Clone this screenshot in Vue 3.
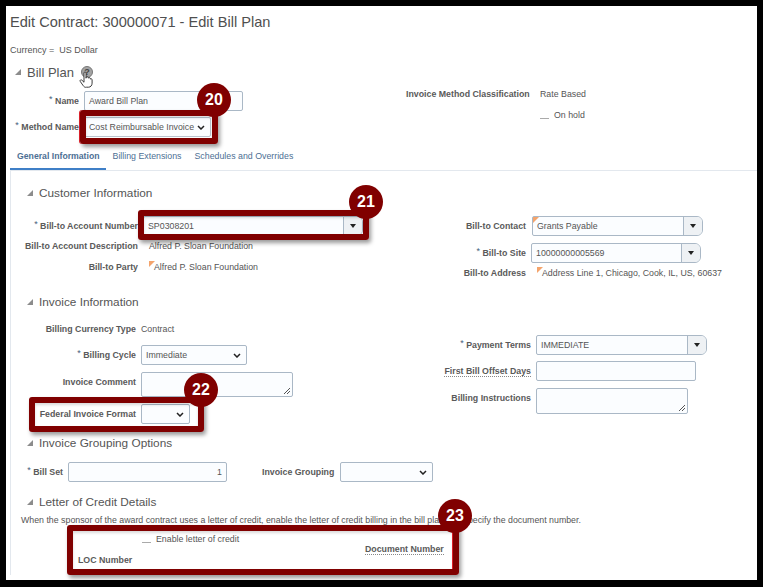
<script setup>
const tabs = ['General Information', 'Billing Extensions', 'Schedules and Overrides']
const callouts = [
  { id: 20, box: { left: '74px', top: '104px', width: '138px', height: '34px' }, dot: { left: '191px', top: '77px' } },
  { id: 21, box: { left: '132px', top: '204px', width: '231px', height: '30px' }, dot: { left: '343px', top: '179px' } },
  { id: 22, box: { left: '23px', top: '391px', width: '175px', height: '35px' }, dot: { left: '178px', top: '367px' } },
  { id: 23, box: { left: '61px', top: '519px', width: '392px', height: '50px' }, dot: { left: '432px', top: '493px' } }
]
</script>

<template>
  <div class="frame">
    <main class="page">
      <h1 class="title">Edit Contract: 300000071 - Edit Bill Plan</h1>
      <p class="currency">Currency = &nbsp;US Dollar</p>

      <h2 class="heading plan">
        <i class="tri"></i>Bill Plan
        <span class="help">?</span>
        <svg class="hand" viewBox="0 0 14 20" width="14" height="18" preserveAspectRatio="none">
          <path d="M5 2.200c0-1.500 2-1.500 2 0V8l.2-1.100c.5-1 2-.8 2 .4l.1.600c.5-1 2-.7 2 .5v.6c.6-.7 1.800-.4 1.800.7v3.800c0 2.500-1.500 4.500-3.500 4.500H7.500C5.800 18.500 5 17.500 4 16L1.200 11.500c-.7-1.200.8-2.300 1.800-1.200L5 12.500z" fill="#fff" stroke="#333" stroke-width="1"/>
        </svg>
      </h2>

      <section class="top">
        <div class="stack top-left">
          <div class="row name-row">
            <label class="lbl w-name"><em>*</em> Name</label>
            <div class="field name-input">Award Bill Plan</div>
          </div>
          <div class="row method-row">
            <label class="lbl w-method"><em>*</em> Method Name</label>
            <div class="field select method-input">Cost Reimbursable Invoice
              <svg class="chev" viewBox="0 0 8 5" width="8" height="5"><path d="M1 1l3 3 3-3" fill="none" stroke="#222" stroke-width="1.500"/></svg>
            </div>
          </div>
        </div>
        <div class="stack top-right">
          <div class="row text-row">
            <label class="lbl w-class">Invoice Method Classification</label>
            <span class="val">Rate Based</span>
          </div>
          <div class="check-row"><i class="dash"></i><span class="val">On hold</span></div>
        </div>
      </section>

      <nav class="tabs">
        <a v-for="(t, i) in tabs" :key="t" class="tab" :class="{ on: i === 0 }">{{ t }}</a>
      </nav>

      <div class="panel">
        <h2 class="heading sub customer-h"><i class="tri"></i>Customer Information</h2>
        <section class="cols customer">
          <div class="left-col">
            <div class="row">
              <label class="lbl w-cust"><em>*</em> Bill-to Account Number</label>
              <div class="field combo account">SP0308201<b class="btn"><i class="down"></i></b></div>
            </div>
            <div class="row text-row">
              <label class="lbl w-cust">Bill-to Account Description</label>
              <span class="val off6">Alfred P. Sloan Foundation</span>
            </div>
            <div class="row text-row party-row">
              <label class="lbl w-cust">Bill-to Party</label>
              <span class="val off6 flagged"><i class="flag"></i>Alfred P. Sloan Foundation</span>
            </div>
          </div>
          <div class="right-col">
            <div class="row">
              <label class="lbl w-right">Bill-to Contact</label>
              <div class="field combo contact"><i class="flag corner"></i>Grants Payable<b class="btn"><i class="down"></i></b></div>
            </div>
            <div class="row site-row">
              <label class="lbl w-right"><em>*</em> Bill-to Site</label>
              <div class="field combo site">10000000005569<b class="btn"><i class="down"></i></b></div>
            </div>
            <div class="row text-row">
              <label class="lbl w-right">Bill-to Address</label>
              <span class="val off6 flagged"><i class="flag"></i>Address Line 1, Chicago, Cook, IL, US, 60637</span>
            </div>
          </div>
        </section>

        <h2 class="heading sub"><i class="tri"></i>Invoice Information</h2>
        <section class="cols invoice">
          <div class="left-col inv-left">
            <div class="row text-row">
              <label class="lbl w-inv">Billing Currency Type</label>
              <span class="val">Contract</span>
            </div>
            <div class="row cycle-row">
              <label class="lbl w-inv"><em>*</em> Billing Cycle</label>
              <div class="field select cycle">Immediate
                <svg class="chev" viewBox="0 0 8 5" width="8" height="5"><path d="M1 1l3 3 3-3" fill="none" stroke="#222" stroke-width="1.500"/></svg>
              </div>
            </div>
            <div class="row comment-row">
              <label class="lbl w-inv">Invoice Comment</label>
              <div class="field area comment">
                <svg class="grip" viewBox="0 0 8 8" width="8" height="8"><path d="M1 7l6-6M4 7l3-3" stroke="#555" stroke-width="1"/></svg>
              </div>
            </div>
            <div class="row federal-row">
              <label class="lbl w-inv">Federal Invoice Format</label>
              <div class="field select federal">
                <svg class="chev" viewBox="0 0 8 5" width="8" height="5"><path d="M1 1l3 3 3-3" fill="none" stroke="#222" stroke-width="1.500"/></svg>
              </div>
            </div>
          </div>
          <div class="right-col inv-right">
            <div class="row">
              <label class="lbl w-right2"><em>*</em> Payment Terms</label>
              <div class="field combo terms">IMMEDIATE<b class="btn"><i class="down"></i></b></div>
            </div>
            <div class="row offset-row">
              <label class="lbl w-right2"><span class="dotted">First Bill Offset Days</span></label>
              <div class="field offset"></div>
            </div>
            <div class="row instr-row">
              <label class="lbl w-right2">Billing Instructions</label>
              <div class="field area instr">
                <svg class="grip" viewBox="0 0 8 8" width="8" height="8"><path d="M1 7l6-6M4 7l3-3" stroke="#555" stroke-width="1"/></svg>
              </div>
            </div>
          </div>
        </section>

        <h2 class="heading sub"><i class="tri"></i>Invoice Grouping Options</h2>
        <section class="group-row">
          <label class="lbl w-set"><em>*</em> Bill Set</label>
          <div class="field billset">1</div>
          <label class="lbl w-group">Invoice Grouping</label>
          <div class="field select grouping">
            <svg class="chev" viewBox="0 0 8 5" width="8" height="5"><path d="M1 1l3 3 3-3" fill="none" stroke="#222" stroke-width="1.500"/></svg>
          </div>
        </section>

        <h2 class="heading sub loc-h"><i class="tri"></i>Letter of Credit Details</h2>
        <p class="note">When the sponsor of the award contract uses a letter of credit, enable the letter of credit billing in the bill plan and specify the document number.</p>
        <section class="loc">
          <div class="loc-left">
            <div class="check-row enable"><i class="dash"></i><span class="val">Enable letter of credit</span></div>
            <label class="lbl loc-number">LOC Number</label>
          </div>
          <label class="lbl doc"><span class="dotted">Document Number</span></label>
        </section>
      </div>

      <template v-for="c in callouts" :key="c.id">
        <div class="callout" :class="'c' + c.id" :style="c.box"></div>
        <div class="dot" :style="c.dot">{{ c.id }}</div>
      </template>
    </main>
  </div>
</template>

<style scoped>
.frame { width: 763px; height: 587px; box-sizing: border-box; padding: 6px 6px 7px 6px; background: #000; font-family: "Liberation Sans", Arial, sans-serif; color: #5a5a5a; overflow: hidden; }
.page { position: relative; width: 751px; height: 574px; background: #fff; overflow: hidden; }
.title { margin: 6px 0 0 4px; font-size: 14.6px; line-height: 20px; font-weight: 400; color: #4f4f4f; white-space: nowrap; }
.currency { margin: 12px 0 0 4px; font-size: 9px; line-height: 12px; font-weight: 400; color: #555; }
.heading { margin: 0; display: flex; align-items: center; font-weight: 400; height: 18px; white-space: nowrap; color: #555; }
.plan { margin: 7px 0 0 9px; font-size: 13px; position: relative; }
.tri { display: inline-block; width: 0; height: 0; border-left: 6px solid transparent; border-bottom: 6px solid #8c8c8c; margin-right: 6px; }
.help { width: 12px; height: 12px; margin-left: 7px; border-radius: 50%; background: #a3a3a3; border: 1px solid #777; box-sizing: border-box; color: #444; font-size: 9px; font-weight: 700; line-height: 10px; text-align: center; }
.hand { position: absolute; left: 64px; top: 8px; }
.top { margin-top: 10px; display: flex; height: 46px; }
.stack { display: flex; flex-direction: column; }
.top-left { width: 400px; flex: none; }
.row { display: flex; align-items: center; height: 20px; flex: none; }
.lbl { flex: none; display: block; text-align: right; font-size: 8.8px; font-weight: 700; color: #5a5a5a; line-height: 12px; white-space: nowrap; }
.lbl em { font-style: normal; font-weight: 400; color: #44617b; font-size: 9px; position: relative; top: -2px; }
.val { font-size: 8.8px; line-height: 12px; color: #555; white-space: nowrap; }
.field { position: relative; box-sizing: border-box; height: 20px; flex: none; background: #fbfdff; border: 1px solid #aab8c6; border-radius: 2px; font-size: 8.8px; line-height: 18px; padding-left: 4px; color: #555; white-space: nowrap; }
.w-name { width: 73px; margin-right: 5px; }
.name-input { width: 159px; }
.method-row { margin-top: 6px; }
.w-method { width: 73px; margin-right: 5px; }
.method-input { width: 127px; border-color: #b9c4cf; }
.chev { position: absolute; right: 5px; top: 7px; }
.top-right { margin-top: -6px; }
.top-right .text-row { height: 18px; }
.w-class { width: 124px; margin-right: 10px; text-align: left; }
.check-row { display: flex; align-items: center; height: 12px; margin: 6px 0 0 134px; }
.dash { display: block; width: 9px; height: 1px; background: #aaa; margin-right: 5px; position: relative; top: 3px; }
.tabs { display: flex; height: 33px; align-items: flex-end; margin-left: 4px; }
.tab { display: block; box-sizing: border-box; height: 20px; font-size: 8.8px; line-height: 12px; color: #4d6f94; padding: 0 6px; margin-right: 1px; white-space: nowrap; }
.tab.on { font-size: 8.7px; font-weight: 700; color: #4d6f94; border-bottom: 2px solid #3f7fc7; padding: 0 6px 0 7px; }
.panel { margin-left: 4px; border-top: 1px solid #e3e8ee; border-left: 1px solid #e3e8ee; height: 404px; }
.sub { margin-left: 16px; font-size: 11.8px; }
.customer-h { margin-top: 13px; }
.cols { display: flex; }
.customer { margin-top: 14px; height: 77px; }
.left-col { width: 389px; flex: none; }
.text-row { height: 20px; }
.party-row { margin-top: 1px; }
.w-cust { width: 127px; margin-right: 5px; }
.account { width: 220px; }
.btn { position: absolute; right: 0; top: 0; bottom: 0; width: 19px; box-sizing: border-box; background: #eef1f4; border-left: 1px solid #aab8c6; border-radius: 0 5px 5px 0; display: flex; align-items: center; justify-content: center; }
.combo { border-radius: 2px 6px 6px 2px; padding-left: 4px; }
.down { display: block; width: 0; height: 0; border-left: 3.500px solid transparent; border-right: 3.500px solid transparent; border-top: 4px solid #222; }
.off6 { margin-left: 6px; }
.flagged { position: relative; padding-left: 5px; }
.flag { position: absolute; left: 0; top: 0; width: 0; height: 0; border-top: 6px solid #f4a46c; border-right: 6px solid transparent; }
.corner { left: 0; top: 0; }
.w-right { width: 126px; margin-right: 5px; }
.contact { width: 171px; margin-left: 1px; }
.site-row { margin-top: 7px; }
.site { width: 170px; }
.invoice { margin-top: 8px; height: 115px; }
.inv-left .text-row { height: 20px; }
.w-inv { width: 125px; margin-right: 5px; }
.cycle-row { margin-top: 6px; }
.cycle { width: 106px; }
.comment-row { margin-top: 7px; height: 25px; align-items: flex-start; }
.comment-row .lbl, .instr-row .lbl { margin-top: 4px; }
.area { height: 100%; }
.comment { width: 152px; }
.grip { position: absolute; right: 1px; bottom: 1px; }
.federal-row { margin-top: 7px; }
.federal { width: 49px; }
.inv-right { padding-top: 16px; }
.w-right2 { width: 131px; margin-right: 5px; }
.terms { width: 171px; }
.offset-row { margin-top: 6px; }
.offset { width: 160px; }
.instr-row { margin-top: 7px; height: 26px; align-items: flex-start; }
.instr { width: 152px; }
.dotted { border-bottom: 1px dotted #888; }
.group-row { margin-top: 10px; display: flex; align-items: center; height: 20px; }
.w-set { width: 52px; margin-right: 5px; }
.billset { width: 159px; text-align: right; padding-right: 4px; }
.w-group { width: 72px; margin: 0 6px 0 35px; }
.grouping { width: 93px; }
.loc-h { margin-top: 11px; }
.note { margin: 3px 0 0 10px; font-size: 8.8px; line-height: 12px; color: #555; white-space: nowrap; }
.loc { display: flex; height: 40px; position: relative; }
.loc-left { width: 354px; flex: none; }
.enable { margin: 7px 0 0 131px; }
.loc-number { text-align: left; margin: 9px 0 0 67px; }
.doc { margin-top: 17px; }
.callout { position: absolute; box-sizing: border-box; border: 6px solid #800000; border-radius: 3px; box-shadow: 2px 3px 4px rgba(0,0,0,.4), inset 0 2px 3px rgba(0,0,0,.15); pointer-events: none; }
.c20 { box-shadow: -1px 0 0 #d8202a, 2px 3px 4px rgba(0,0,0,.4), inset 0 2px 3px rgba(0,0,0,.15); }
.c23 { box-shadow: 2px 3px 4px rgba(0,0,0,.4), inset 0 2px 3px rgba(0,0,0,.15), inset -1px 0 0 #e8202a; }
.dot { position: absolute; width: 34px; height: 34px; border-radius: 50%; background: #800000; color: #fff; font-size: 16px; font-weight: 700; line-height: 34px; text-align: center; }
</style>
